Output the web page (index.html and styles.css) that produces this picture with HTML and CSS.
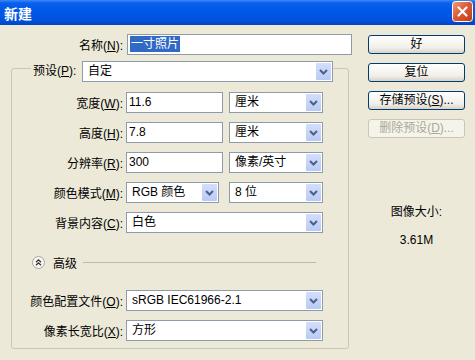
FILE: index.html
```html
<!DOCTYPE html>
<html lang="zh-CN">
<head>
    <meta charset="UTF-8" />
    <meta name="viewport" content="width=device-width, initial-scale=1.0"/>
    <title>新建</title>
    <link rel="stylesheet" href="styles.css">
</head>
<body>
<div class="dialog">
    <!-- 标题栏 -->
    <div class="titlebar">
        <span class="title">新建</span>
        <span class="close">
            <svg width="21" height="21" viewBox="0 0 21 21">
                <defs>
                    <linearGradient id="closeBg" x1="0" y1="0" x2="1" y2="1">
                        <stop offset="0" stop-color="#f0a080"/>
                        <stop offset="0.45" stop-color="#dc5c36"/>
                        <stop offset="1" stop-color="#c03a14"/>
                    </linearGradient>
                </defs>
                <rect x="0.5" y="0.5" width="20" height="20" rx="3" fill="url(#closeBg)" stroke="#fff"/>
                <path d="M6.5 6.5 L14.5 14.5 M14.5 6.5 L6.5 14.5" stroke="#fff" stroke-width="2.2" stroke-linecap="round"/>
            </svg>
        </span>
    </div>

    <div class="dialog-body">
        <div class="main">
            <!-- 名称 -->
            <div class="name-row">
                <span class="name-label">名称(<u>N</u>):</span>
                <div class="input name-input"><span class="selected">一寸照片</span></div>
            </div>

            <!-- 预设分组 -->
            <div class="group">
                <div class="group-head">
                    <span class="head-label">预设(<u>P</u>):</span>
                    <div class="combo preset">
                        <span class="combo-text">自定</span>
                        <span class="arrow"><svg width="9" height="6" viewBox="0 0 9 6"><path d="M1 1 L4.5 4.5 L8 1" fill="none" stroke="#4d6185" stroke-width="2"/></svg></span>
                    </div>
                </div>

                <div class="row first">
                    <span class="label">宽度(<u>W</u>):</span>
                    <div class="input num">11.6</div>
                    <div class="combo unit">
                        <span class="combo-text">厘米</span>
                        <span class="arrow"><svg width="9" height="6" viewBox="0 0 9 6"><path d="M1 1 L4.5 4.5 L8 1" fill="none" stroke="#4d6185" stroke-width="2"/></svg></span>
                    </div>
                </div>

                <div class="row">
                    <span class="label">高度(<u>H</u>):</span>
                    <div class="input num">7.8</div>
                    <div class="combo unit">
                        <span class="combo-text">厘米</span>
                        <span class="arrow"><svg width="9" height="6" viewBox="0 0 9 6"><path d="M1 1 L4.5 4.5 L8 1" fill="none" stroke="#4d6185" stroke-width="2"/></svg></span>
                    </div>
                </div>

                <div class="row">
                    <span class="label">分辨率(<u>R</u>):</span>
                    <div class="input num">300</div>
                    <div class="combo unit">
                        <span class="combo-text">像素/英寸</span>
                        <span class="arrow"><svg width="9" height="6" viewBox="0 0 9 6"><path d="M1 1 L4.5 4.5 L8 1" fill="none" stroke="#4d6185" stroke-width="2"/></svg></span>
                    </div>
                </div>

                <div class="row">
                    <span class="label">颜色模式(<u>M</u>):</span>
                    <div class="combo mode">
                        <span class="combo-text">RGB 颜色</span>
                        <span class="arrow"><svg width="9" height="6" viewBox="0 0 9 6"><path d="M1 1 L4.5 4.5 L8 1" fill="none" stroke="#4d6185" stroke-width="2"/></svg></span>
                    </div>
                    <div class="combo unit bits">
                        <span class="combo-text">8 位</span>
                        <span class="arrow"><svg width="9" height="6" viewBox="0 0 9 6"><path d="M1 1 L4.5 4.5 L8 1" fill="none" stroke="#4d6185" stroke-width="2"/></svg></span>
                    </div>
                </div>

                <div class="row">
                    <span class="label">背景内容(<u>C</u>):</span>
                    <div class="combo wide">
                        <span class="combo-text">白色</span>
                        <span class="arrow"><svg width="9" height="6" viewBox="0 0 9 6"><path d="M1 1 L4.5 4.5 L8 1" fill="none" stroke="#4d6185" stroke-width="2"/></svg></span>
                    </div>
                </div>

                <!-- 高级 -->
                <div class="advanced">
                    <span class="adv-btn">
                        <svg width="13" height="13" viewBox="0 0 13 13">
                            <circle cx="6.5" cy="6.5" r="6" fill="#f7f6f1" stroke="#a8a69c"/>
                            <path d="M4 6.2 L6.5 3.8 L9 6.2 M4 9.2 L6.5 6.8 L9 9.2" fill="none" stroke="#333" stroke-width="1.3"/>
                        </svg>
                    </span>
                    <span class="adv-text">高级</span>
                    <span class="adv-line"></span>
                </div>

                <div class="row profile">
                    <span class="label">颜色配置文件(<u>O</u>):</span>
                    <div class="combo wide">
                        <span class="combo-text">sRGB IEC61966-2.1</span>
                        <span class="arrow"><svg width="9" height="6" viewBox="0 0 9 6"><path d="M1 1 L4.5 4.5 L8 1" fill="none" stroke="#4d6185" stroke-width="2"/></svg></span>
                    </div>
                </div>

                <div class="row">
                    <span class="label">像素长宽比(<u>X</u>):</span>
                    <div class="combo wide">
                        <span class="combo-text">方形</span>
                        <span class="arrow"><svg width="9" height="6" viewBox="0 0 9 6"><path d="M1 1 L4.5 4.5 L8 1" fill="none" stroke="#4d6185" stroke-width="2"/></svg></span>
                    </div>
                </div>
            </div>
        </div>

        <!-- 右侧按钮 -->
        <div class="side">
            <div class="btn">好</div>
            <div class="btn">复位</div>
            <div class="btn">存储预设(<u>S</u>)...</div>
            <div class="btn disabled">删除预设(<u>D</u>)...</div>

            <div class="size-title">图像大小:</div>
            <div class="size-value">3.61M</div>
        </div>
    </div>
</div>
</body>
</html>
```

FILE: styles.css
```css
body {
    margin: 0;
    background: #ece9d8;
    font: 12px "Liberation Sans", "Noto Sans CJK SC", sans-serif;
    color: #000;
}
.dialog {
    width: 475px;
    height: 360px;
    overflow: hidden;
    background: #ece9d8;
}
.titlebar {
    height: 25px;
    display: flex;
    align-items: center;
    justify-content: space-between;
    padding: 0 2px 0 4px;
    background: linear-gradient(to bottom, #3a8cf8 0, #0a5eec 3px, #0058e6 12px, #0052dc 20px, #0044c4 25px);
}
.title {
    color: #fff;
    font-weight: bold;
    font-size: 14px;
}
.close {
    display: flex;
    margin-top: -2px;
}
.dialog-body {
    display: flex;
    padding-top: 9px;
}
.main {
    width: 352px;
}
.name-row {
    display: flex;
    align-items: center;
    height: 21px;
}
.name-label {
    width: 123px;
    margin-right: 4px;
    text-align: right;
}
.input {
    box-sizing: border-box;
    height: 21px;
    line-height: 19px;
    padding-left: 2px;
    background: #fff;
    border: 1px solid #8d9bab;
}
.name-input {
    flex: 1;
}
.selected {
    background: #316ac5;
    color: #fff;
    padding: 1px 1px;
}
.group {
    box-sizing: border-box;
    width: 338px;
    margin: 13px 0 0 11px;
    padding-bottom: 7px;
    border: 1px solid #c9c6b6;
    border-radius: 3px;
}
.group-head {
    display: flex;
    align-items: center;
    height: 21px;
    margin: -8px 0 0 19px;
}
.head-label {
    width: 47px;
    padding: 0 2px;
    line-height: 15px;
    background: #ece9d8;
}
.combo {
    box-sizing: border-box;
    display: flex;
    height: 21px;
    background: #fff;
    border: 1px solid #8d9bab;
}
.combo-text {
    flex: 1;
    padding-left: 5px;
    line-height: 19px;
    white-space: nowrap;
    overflow: hidden;
}
.arrow {
    width: 15px;
    margin: 1px;
    display: flex;
    align-items: center;
    justify-content: center;
    background: linear-gradient(to bottom, #d3defb, #b9cbf5);
    border-radius: 1px;
}
.preset {
    width: 251px;
}
.row {
    display: flex;
    align-items: center;
    height: 21px;
    margin-top: 9px;
}
.row.first {
    margin-top: 10px;
}
.row.profile {
    margin-top: 21px;
}
.label {
    width: 111px;
    margin-right: 3px;
    text-align: right;
    white-space: nowrap;
}
.num {
    width: 97px;
}
.unit {
    width: 94px;
    margin-left: 6px;
}
.mode {
    width: 93px;
}
.bits {
    margin-left: 10px;
}
.wide {
    width: 197px;
}
.advanced {
    display: flex;
    align-items: center;
    height: 14px;
    margin-top: 22px;
    padding-left: 20px;
}
.adv-btn {
    display: flex;
}
.adv-text {
    margin-left: 8px;
}
.adv-line {
    flex: 1;
    margin: 0 32px 0 6px;
    border-top: 1px solid #bdbbae;
}
.side {
    width: 97px;
    margin-left: 16px;
    padding-top: 1px;
}
.btn {
    box-sizing: border-box;
    height: 19px;
    margin-bottom: 9px;
    line-height: 17px;
    text-align: center;
    border: 1px solid #003c74;
    border-radius: 3px;
    background: linear-gradient(to bottom, #fff, #f1efe8 70%, #d8d3c8);
}
.btn.disabled {
    color: #aca899;
    border-color: #c9c7ba;
    background: #f5f4ea;
}
.size-title {
    margin-top: 67px;
    line-height: 15px;
    text-align: center;
}
.size-value {
    margin-top: 13px;
    line-height: 15px;
    text-align: center;
}
```
